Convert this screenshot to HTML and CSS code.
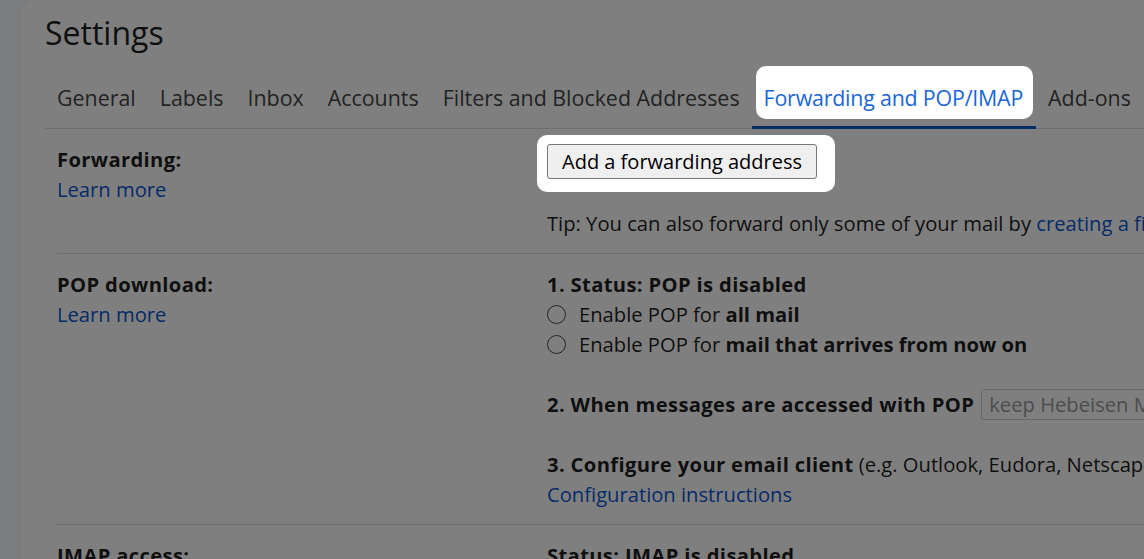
FILE: index.html
```html
<!DOCTYPE html>
<html lang="en">
<head>
<meta charset="utf-8">
<title>Settings</title>
<link rel="stylesheet" href="styles.css">
</head>
<body>
<div class="app">
  <main class="card">
    <h1 class="title">Settings</h1>
    <nav class="tabs">
      <span class="tab">General</span>
      <span class="tab">Labels</span>
      <span class="tab">Inbox</span>
      <span class="tab">Accounts</span>
      <span class="tab">Filters and Blocked Addresses</span>
      <span class="tab tab-active"><span class="hl hl-tab">Forwarding and POP/IMAP</span></span>
      <span class="tab">Add-ons</span>
    </nav>
    <section class="rows">
      <div class="row">
        <div class="label">
          <div class="strong">Forwarding:</div>
          <a class="link">Learn more</a>
        </div>
        <div class="value">
          <div class="btn-line"><span class="hl hl-btn"><button class="btn" type="button">Add a forwarding address</button></span></div>
          <div class="line tip">Tip: You can also forward only some of your mail by <a class="link">creating a filter!</a></div>
        </div>
      </div>
      <div class="row">
        <div class="label">
          <div class="strong">POP download:</div>
          <a class="link">Learn more</a>
        </div>
        <div class="value">
          <div class="line strong">1. Status: POP is disabled</div>
          <div class="line radio-line"><span class="radio"></span><span>Enable POP for <b class="opt">all mail</b></span></div>
          <div class="line radio-line"><span class="radio"></span><span>Enable POP for <b class="opt">mail that arrives from now on</b></span></div>
          <div class="line spaced"><b>2. When messages are accessed with POP</b><span class="select">keep Hebeisen Mail's copy in the Inbox</span></div>
          <div class="line spaced-plain"><b>3. Configure your email client</b> (e.g. Outlook, Eudora, Netscape Mail)</div>
          <a class="line link">Configuration instructions</a>
        </div>
      </div>
      <div class="row">
        <div class="label">
          <div class="strong">IMAP access:</div>
          <div>(access Gmail from other clients using IMAP)</div>
        </div>
        <div class="value">
          <div class="line strong">Status: IMAP is disabled</div>
        </div>
      </div>
    </section>
  </main>
</div>
<div class="overlay"></div>
</body>
</html>
```
FILE: styles.css
```css
html, body {
  margin: 0;
  padding: 0;
  overflow: hidden;
  height: 100%;
}
body {
  background: #f6f8fc;
  font-family: "Open Sans", "Noto Sans", sans-serif;
  color: #1f1f1f;
}
.app {
  padding-left: 21px;
  height: 100%;
}
.card {
  background: #ffffff;
  border-radius: 16px 0 0 0;
  height: 100%;
  padding: 11px 0 0 24px;
  box-sizing: border-box;
  min-width: 1400px;
}
.title {
  margin: 0;
  font-size: 32px;
  line-height: 44px;
  font-weight: 400;
  color: #1f1f1f;
}
.tabs {
  display: flex;
  margin-top: 13px;
  border-bottom: 1px solid #dcdcdc;
  white-space: nowrap;
}
.tab {
  padding: 16px 12px 14px;
  font-size: 21.4px;
  line-height: 28px;
  color: #444746;
  border-bottom: 3px solid transparent;
  margin-bottom: -1px;
}
.tab-active {
  border-bottom-color: #0b57d0;
  color: #1a66d8;
  padding-right: 13px;
  letter-spacing: -0.2px;
}
.hl {
  position: relative;
  z-index: 11;
  background: #ffffff;
  display: inline-block;
  border-radius: 10px;
}
.hl-tab {
  padding: 18px 10px 7px 8px;
  margin: -18px -10px -7px -8px;
}
.rows {
  margin-left: 12px;
}
.row {
  display: grid;
  grid-template-columns: 490px 1fr;
  padding: 15px 0;
  border-bottom: 1px solid #dcdcdc;
  font-size: 20.2px;
  line-height: 30px;
  white-space: nowrap;
}
.label {
  display: flex;
  flex-direction: column;
  align-items: flex-start;
}
.value {
  display: flex;
  flex-direction: column;
  align-items: flex-start;
}
.strong, b {
  font-weight: 700;
  letter-spacing: 0.35px;
}
b.opt {
  letter-spacing: 0;
}
.link {
  color: #0b57d0;
  text-decoration: none;
}
.btn-line {
  height: 35px;
}
.hl-btn {
  padding: 9px 18px 13px 10px;
  margin: -9px -18px -13px -10px;
}
.btn {
  display: block;
  font-family: "Open Sans", "Noto Sans", sans-serif;
  font-size: 20px;
  line-height: 27px;
  height: 35px;
  padding: 0 14px;
  background: #efefef;
  color: #000000;
  border: 1px solid #767676;
  border-radius: 3px;
}
.tip {
  margin-top: 29px;
}
.radio-line {
  display: flex;
  align-items: center;
}
.radio {
  width: 19px;
  height: 19px;
  box-sizing: border-box;
  border: 1.5px solid #444746;
  border-radius: 50%;
  margin-right: 13px;
}
.spaced {
  margin-top: 30px;
  display: flex;
  align-items: center;
  height: 30px;
}
.spaced-plain {
  margin-top: 30px;
}
.select {
  margin-left: 7px;
  height: 31px;
  box-sizing: border-box;
  border: 1px solid #d0d0d0;
  border-radius: 3px;
  padding: 0 7px;
  line-height: 29px;
  color: #9a9a9a;
  font-weight: 400;
  letter-spacing: 0;
}
.overlay {
  position: fixed;
  inset: 0;
  z-index: 10;
  background: rgba(0, 0, 0, 0.5);
}
```
